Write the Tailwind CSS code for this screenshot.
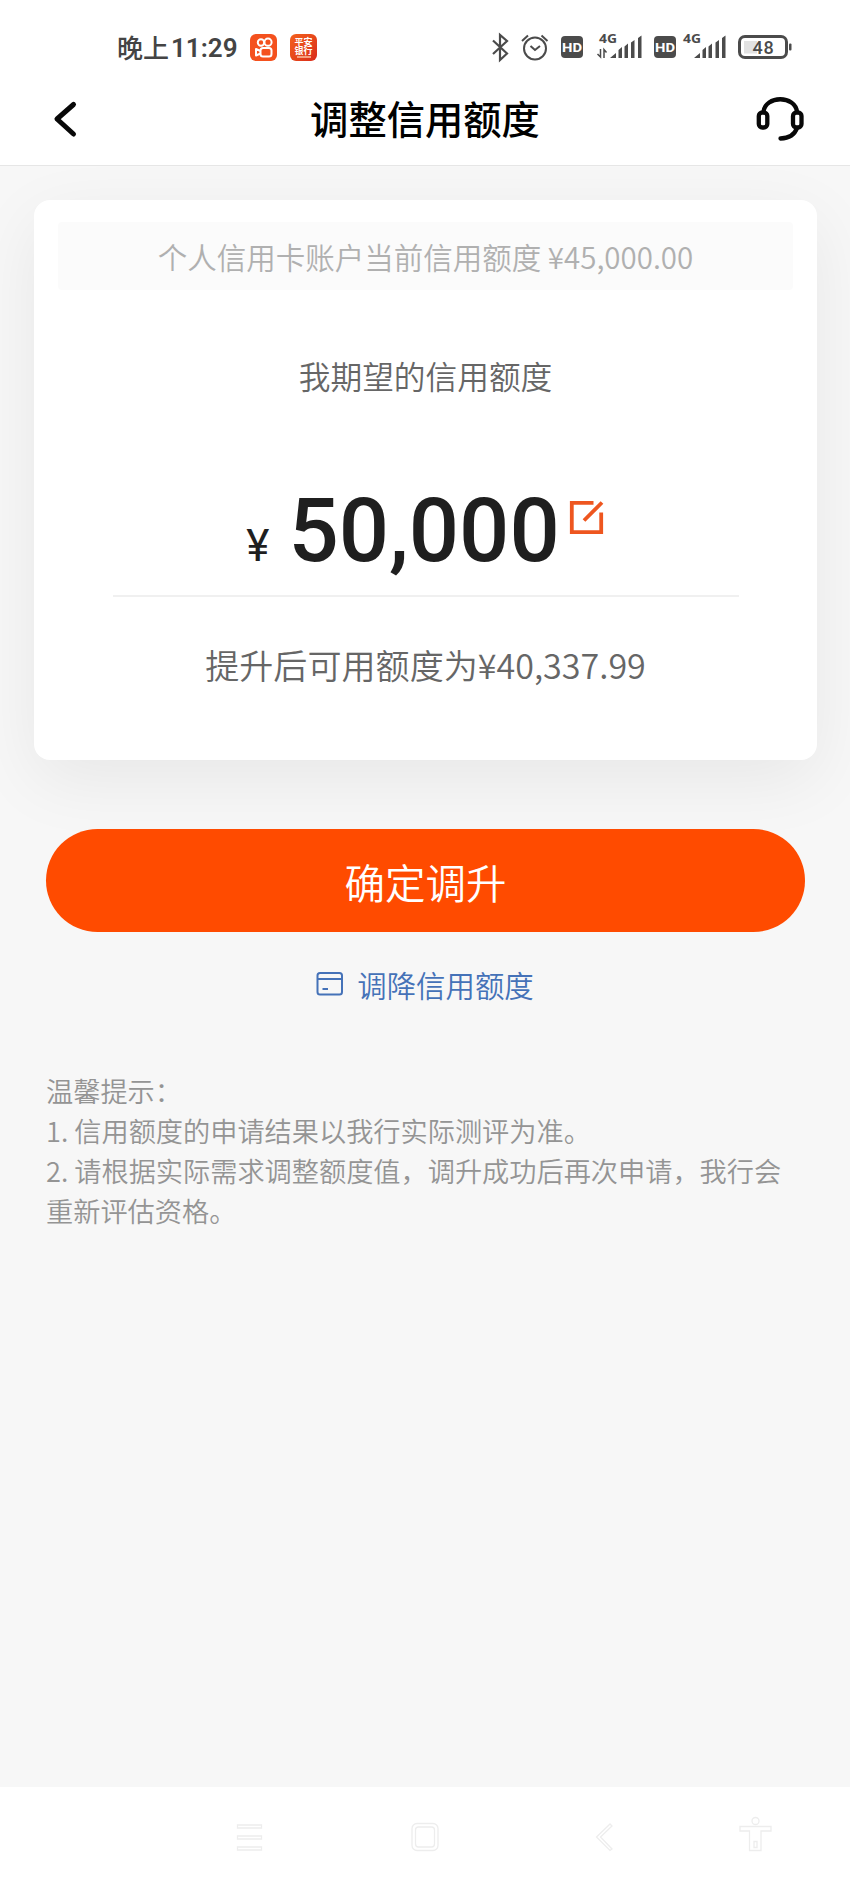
<!DOCTYPE html>
<html lang="zh-CN">
<head>
<meta charset="utf-8">
<title>调整信用额度</title>
<script src="https://cdn.jsdelivr.net/npm/@tailwindcss/browser@4"></script>
</head>
<body class="bg-[#f7f7f7] font-['Noto_Sans_CJK_SC',sans-serif]">
<div class="flex h-[1889px] w-[850px] flex-col overflow-hidden">
  <!-- status bar -->
  <div class="flex h-[80px] shrink-0 items-center bg-white pl-[117px] pt-[14px] text-[#444]">
    <div class="flex w-[133px] items-center text-[26px] leading-[36px] font-medium"><span>晚上</span><span class="pl-[2px] pt-[2px] font-['Roboto',sans-serif] font-semibold">11:29</span></div>
    <svg class="h-[27px] w-[27px]" viewBox="0 0 27 27" fill="none" stroke="#fff" stroke-width="2"><rect width="27" height="27" rx="6" fill="#f4511e" stroke="none"/><circle cx="11" cy="8.5" r="3.2"/><circle cx="18" cy="8.2" r="3.6"/><rect x="10.5" y="14" width="11" height="8.5" rx="2.5"/><path d="M10.5 17l-4.5-2v6.500l4.500-2" stroke-linejoin="round"/></svg>
    <div class="ml-[13px] flex h-[27px] w-[27px] flex-col items-center rounded-[6px] bg-gradient-to-br from-[#f4601c] to-[#d92a1a] pt-[3px] text-[9px] leading-[9px] font-bold text-white"><span>平安</span><span>银行</span><span class="mt-[1px] h-[2px] w-[14px] bg-[#f5a080]"></span></div>
    <svg class="ml-[173px] h-[40px] w-[320px]" viewBox="0 0 320 40" fill="none" stroke="#4b4b4b" stroke-width="2">
      <path d="M3 13.500L17 26.500L10 33V8L17 14L3 27" stroke-width="2.200"/>
      <circle cx="45" cy="21.500" r="11"/><path d="M40.500 19l4.500 4l5-4M32 14l6-5.500M51.500 8.500l6 5.500"/>
      <rect x="71" y="9" width="22" height="22" rx="4" fill="#4b4b4b" stroke="none"/>
      <rect x="164" y="9" width="22" height="22" rx="4" fill="#4b4b4b" stroke="none"/>
      <g stroke="none" fill="#4b4b4b">
        <path d="M120 31l6-5v5zM128.500 23l3.500-3v11h-3.500zM134.500 19.500l3.500-3v14.500h-3.500zM141 15.500l3.500-2.500v18h-3.500zM148 11l3.500-2.500v22.500h-3.500z"/>
        <path d="M204 31l6-5v5zM212.500 23l3.500-3v11h-3.500zM218.500 19.500l3.500-3v14.500h-3.500zM225.500 15.500l3.500-2.500v18h-3.500zM232 11l3.500-2.500v22.500h-3.500z"/>
        <rect x="299" y="16.500" width="2.500" height="7" rx="1"/>
        <rect x="254" y="14" width="13" height="12.500" fill="#e2e2e2"/>
        <g font-family="Open Sans" font-weight="700" font-size="11.500"><text x="109" y="16" textLength="18" lengthAdjust="spacingAndGlyphs">4G</text><text x="193" y="16" textLength="18" lengthAdjust="spacingAndGlyphs">4G</text></g>
        <g fill="#fff" font-family="Roboto" font-weight="700" font-size="13.500"><text x="72" y="25" textLength="20" lengthAdjust="spacingAndGlyphs">HD</text><text x="165" y="25" textLength="20" lengthAdjust="spacingAndGlyphs">HD</text></g>
        <text x="262.500" y="27" font-family="Roboto" font-weight="500" font-size="18" letter-spacing="0.800">48</text>
      </g>
      <path d="M110.500 22v8l-3-3M114 31v-8.500l2.500 3" stroke-width="1.500"/>
      <rect x="249.500" y="9.500" width="47" height="21" rx="5.500" stroke-width="3"/>
    </svg>
  </div>
  <!-- title bar -->
  <header class="flex h-[86px] shrink-0 items-center justify-between border-b border-[#e6e6e6] bg-white pl-[52px] pr-[42px]">
    <svg class="h-[60px] w-[54px]" viewBox="0 0 54 60" fill="none" stroke="#080808" stroke-width="5" stroke-linecap="round" stroke-linejoin="round"><path d="M21.500 11.500L5 26L21.500 41"/></svg>
    <h1 class="mr-[10px] pb-[10px] text-[38.300px] leading-[50px] font-medium text-black">调整信用额度</h1>
    <svg class="h-[60px] w-[54px]" viewBox="0 0 54 60" fill="none" stroke="#080808" stroke-width="4.300" stroke-linecap="round"><rect x="4.800" y="19.500" width="8.500" height="15" rx="3.500"/><rect x="39" y="19.500" width="8.500" height="15" rx="3.500"/><path d="M9.500 19C11 2 41.500 2 43 19M43 35Q39.500 45 26.500 45.500"/></svg>
  </header>
  <!-- page content -->
  <main class="flex h-[1621px] shrink-0 flex-col px-[34px] pt-[34px] font-[350]">
    <section class="flex h-[560px] w-[783px] shrink-0 flex-col items-center rounded-[16px] bg-white pt-[22px] shadow-[0_20px_70px_rgba(0,0,0,0.065)]">
      <div class="flex h-[68px] w-[735px] items-center justify-center rounded-[4px] bg-[#fbfbfb] text-[29.500px] text-[#b0b0b0]"><span class="whitespace-pre">个人信用卡账户当前信用额度 ¥45,000.00</span></div>
      <h2 class="mt-[63px] text-[31.700px] leading-[44px] text-[#666]">我期望的信用额度</h2>
      <div class="mt-[79px] flex h-[121px] w-[626px] justify-center border-b-2 border-[#f0f0f0] text-[#1f1f1f]">
        <div class="flex items-baseline font-['Roboto',sans-serif]"><span class="mr-[19px] text-[44px] font-normal">¥</span><span class="text-[88.500px] leading-[110px] font-medium">50,000</span></div>
        <svg class="ml-[9px] mt-[23px] h-[37px] w-[36px]" viewBox="0 0 36 37" fill="none" stroke="#ee561f" stroke-width="3.800"><path d="M24.500 3.800H2.800V33.200H32.200V13.500M15 21.500L33 3.500"/></svg>
      </div>
      <p class="mt-[44px] text-[34.100px] leading-[46px] text-[#666]">提升后可用额度为¥40,337.99</p>
    </section>
    <button class="mx-[12px] mt-[69px] flex h-[103px] w-[759px] shrink-0 items-center justify-center rounded-full bg-[#ff4b00] pt-[4px] text-[40.500px] text-white">确定调升</button>
    <a class="mt-[30px] flex h-[44px] items-center justify-center text-[29.400px] leading-[44px] text-[#4572b8]">
      <svg class="mr-[13px] h-[26px] w-[28px]" viewBox="0 0 28 26" fill="none" stroke="#4572b8" stroke-width="2"><rect x="1.500" y="2" width="24.500" height="21.500" rx="2.500"/><path d="M2 8H26M6.500 18H12"/></svg>
      <span>调降信用额度</span>
    </a>
    <div class="ml-[12px] mt-[64px] w-[759px] text-[27.200px] leading-[40px] text-[#949494]">
      <p>温馨提示：</p>
      <p>1. 信用额度的申请结果以我行实际测评为准。</p>
      <p>2. 请根据实际需求调整额度值，调升成功后再次申请，我行会重新评估资格。</p>
    </div>
  </main>
  <!-- system navigation -->
  <nav class="flex flex-1 items-center bg-white pb-[4px] pl-[230px]">
    <svg class="h-[60px] w-[560px]" viewBox="0 0 560 60" fill="#fff" stroke="#ededed" stroke-width="1.300">
      <path d="M7.500 19h24v3h-24zM7.500 30h24v3h-24zM7.500 41h24v3h-24z"/>
      <rect x="182" y="17.500" width="26" height="27" rx="5"/><rect x="185.500" y="21" width="19" height="20" rx="3"/>
      <path d="M380 18L366.500 31L380 44.500L382 43L370.500 31L382 20z"/>
      <circle cx="525.500" cy="15" r="3.500"/><path d="M510 20.500H541V25H531V44.500H519.500V25H510zM524 35.500h3v6h-3z"/>
    </svg>
  </nav>
</div>
</body>
</html>
